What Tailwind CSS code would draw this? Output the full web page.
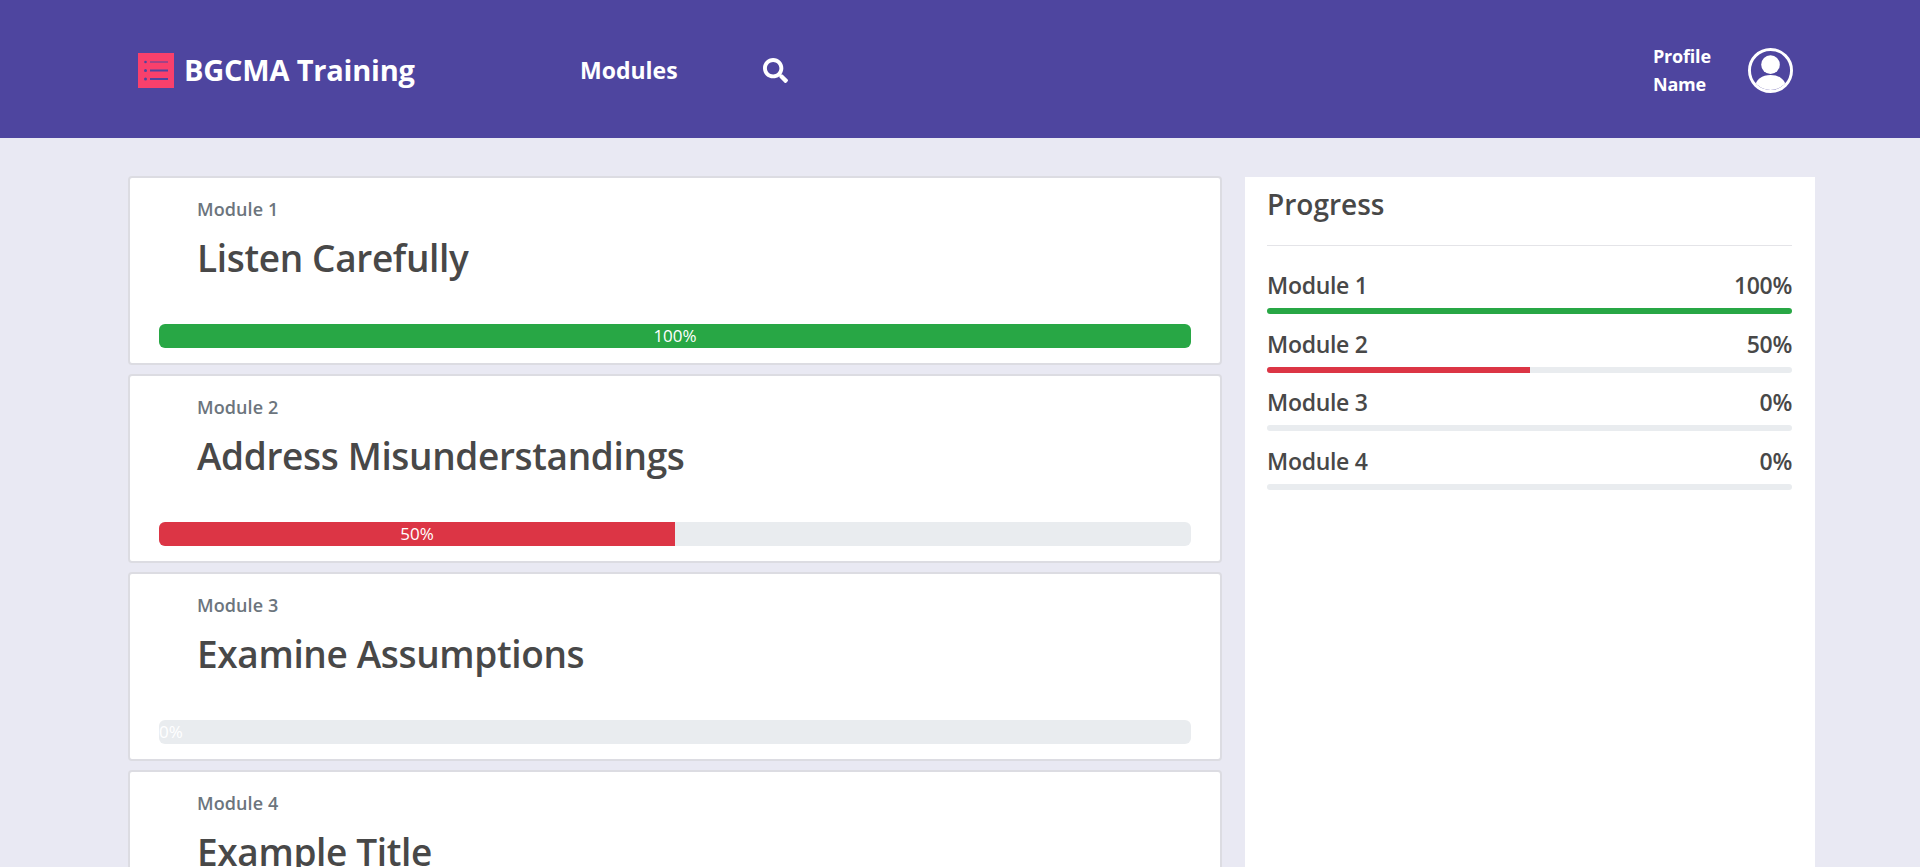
<!DOCTYPE html>
<html>
    <head>
        <meta charset="UTF-8">
        <meta name="viewport" content="width=device-width, initial-scale=1.0">
        <title>BGCMA Training</title>
        <script src="https://cdn.jsdelivr.net/npm/@tailwindcss/browser@4"></script>
    </head>
    <body class="h-screen overflow-hidden bg-[#e9e9f3] font-['Open_Sans','Noto_Sans',sans-serif] text-[#484848]">

        <header class="flex h-[138px] items-center bg-[#4e459f] pt-[2px] text-white">
            <div class="ml-[138px] flex w-[442px] items-center">
                <svg class="h-[35px] w-[36px]" viewBox="0 0 36 35">
                    <rect width="36" height="35" fill="#f9406c"/>
                    <g fill="#4e459f">
                        <circle cx="7.5" cy="9" r="1.3"/>
                        <circle cx="7.5" cy="17.5" r="1.5"/>
                        <circle cx="7.5" cy="26" r="1.5"/>
                        <rect x="12" y="8.5" width="18" height="1"/>
                        <rect x="12" y="16.5" width="18" height="2"/>
                        <rect x="12" y="25" width="18" height="2"/>
                    </g>
                </svg>
                <span class="ml-[10px] text-[29px] font-bold tracking-[-0.2px]">BGCMA Training</span>
            </div>
            <a class="w-[183px] text-[23px] font-bold">Modules</a>
            <svg class="h-[25px] w-[25px]" viewBox="0 0 512 512" fill="white">
                <path d="M505 442.700L405.300 343c-4.500-4.500-10.600-7-17-7H372c27.600-35.300 44-79.700 44-128C416 93.100 322.900 0 208 0S0 93.100 0 208s93.100 208 208 208c48.300 0 92.700-16.400 128-44v16.300c0 6.400 2.500 12.500 7 17l99.700 99.700c9.400 9.400 24.600 9.400 33.900 0l28.300-28.300c9.400-9.400 9.400-24.600.1-34zM208 336c-70.700 0-128-57.200-128-128 0-70.700 57.200-128 128-128 70.700 0 128 57.200 128 128 0 70.700-57.200 128-128 128z"/>
            </svg>
            <div class="ml-auto w-[95px] text-[18px] font-bold leading-[28px] tracking-[-0.2px]">Profile<br>Name</div>
            <svg class="mr-[127px] h-[45px] w-[45px]" viewBox="0 0 46 46">
                <defs>
                    <clipPath id="ring"><circle cx="23" cy="23" r="20"/></clipPath>
                </defs>
                <circle cx="23" cy="23" r="21.500" fill="none" stroke="white" stroke-width="3"/>
                <circle cx="23" cy="17" r="9.500" fill="white"/>
                <g clip-path="url(#ring)">
                    <ellipse cx="23" cy="39" rx="15.500" ry="11.500" fill="white"/>
                </g>
            </svg>
        </header>

        <main class="flex items-start gap-[23px] pl-[128px] pt-[38px]">
            <section class="flex w-[1094px] flex-col gap-[9px]">
                <article class="h-[189px] rounded border-2 border-[#dcdce2] bg-white px-[29px] pt-[18px]">
                    <p class="pl-[38px] text-[18px] leading-[27px] font-semibold text-[#6c757d] tracking-[0.1px]">Module 1</p>
                    <h2 class="mt-[10px] h-[91px] pl-[38px] text-[37px] leading-[50px] font-semibold tracking-[-0.35px]">Listen Carefully</h2>
                    <div class="h-6 overflow-hidden rounded-md bg-[#e9ecef] text-center text-[17px] leading-6 text-white">
                        <div class="h-full w-full bg-[#28a745]">100%</div>
                    </div>
                </article>
                <article class="h-[189px] rounded border-2 border-[#dcdce2] bg-white px-[29px] pt-[18px]">
                    <p class="pl-[38px] text-[18px] leading-[27px] font-semibold text-[#6c757d] tracking-[0.1px]">Module 2</p>
                    <h2 class="mt-[10px] h-[91px] pl-[38px] text-[37px] leading-[50px] font-semibold tracking-[-0.35px]">Address Misunderstandings</h2>
                    <div class="h-6 overflow-hidden rounded-md bg-[#e9ecef] text-center text-[17px] leading-6 text-white">
                        <div class="h-full w-1/2 bg-[#dc3545]">50%</div>
                    </div>
                </article>
                <article class="h-[189px] rounded border-2 border-[#dcdce2] bg-white px-[29px] pt-[18px]">
                    <p class="pl-[38px] text-[18px] leading-[27px] font-semibold text-[#6c757d] tracking-[0.1px]">Module 3</p>
                    <h2 class="mt-[10px] h-[91px] pl-[38px] text-[37px] leading-[50px] font-semibold tracking-[-0.35px]">Examine Assumptions</h2>
                    <div class="h-6 overflow-hidden rounded-md bg-[#e9ecef] text-[17px] leading-6 text-white">0%</div>
                </article>
                <article class="h-[189px] rounded border-2 border-[#dcdce2] bg-white px-[29px] pt-[18px]">
                    <p class="pl-[38px] text-[18px] leading-[27px] font-semibold text-[#6c757d] tracking-[0.1px]">Module 4</p>
                    <h2 class="mt-[10px] h-[91px] pl-[38px] text-[37px] leading-[50px] font-semibold tracking-[-0.35px]">Example Title</h2>
                </article>
            </section>

            <aside class="mt-px h-[700px] w-[570px] bg-white pl-[22px] pr-[23px]">
                <h3 class="h-[69px] border-b border-[#e4e4e8] pt-[7px] text-[28px] leading-[40px] font-semibold">Progress</h3>
                <ul class="pt-[23px]">
                    <li class="h-[58.700px]">
                        <div class="flex h-[39px] items-start justify-between text-[23px] leading-[32px] font-semibold tracking-[-0.3px]"><span>Module 1</span><span>100%</span></div>
                        <div class="h-1.5 overflow-hidden rounded-sm bg-[#e9ecef]"><div class="h-full w-full bg-[#28a745]"></div></div>
                    </li>
                    <li class="h-[58.700px]">
                        <div class="flex h-[39px] items-start justify-between text-[23px] leading-[32px] font-semibold tracking-[-0.3px]"><span>Module 2</span><span>50%</span></div>
                        <div class="h-1.5 overflow-hidden rounded-sm bg-[#e9ecef]"><div class="h-full w-1/2 bg-[#dc3545]"></div></div>
                    </li>
                    <li class="h-[58.700px]">
                        <div class="flex h-[39px] items-start justify-between text-[23px] leading-[32px] font-semibold tracking-[-0.3px]"><span>Module 3</span><span>0%</span></div>
                        <div class="h-1.5 rounded-sm bg-[#e9ecef]"></div>
                    </li>
                    <li class="h-[58.700px]">
                        <div class="flex h-[39px] items-start justify-between text-[23px] leading-[32px] font-semibold tracking-[-0.3px]"><span>Module 4</span><span>0%</span></div>
                        <div class="h-1.5 rounded-sm bg-[#e9ecef]"></div>
                    </li>
                </ul>
            </aside>
        </main>

    </body>
</html>
